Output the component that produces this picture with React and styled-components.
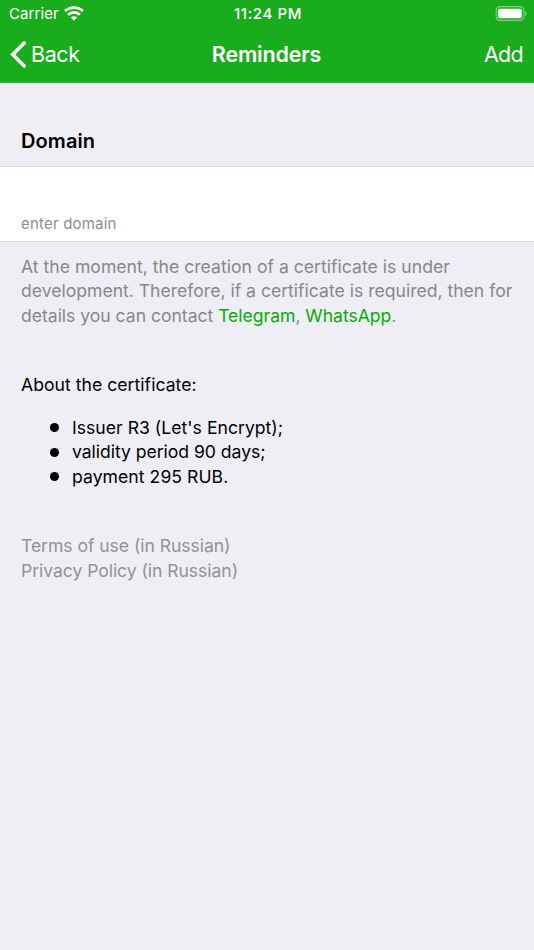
import styled, {createGlobalStyle} from 'styled-components';

const GlobalStyle = createGlobalStyle`
  * {
    box-sizing: border-box;
  }
  body {
    margin: 0;
    background: #efeef4;
    color: #000;
    font-family: Inter, 'Liberation Sans', sans-serif;
  }
`;
const Screen = styled.div`
  min-height: 950px;
  overflow: hidden;
`;
const Header = styled.header`
  height: 83px;
  background: #19ad1d;
  border-bottom: 1px solid #3fb548;
  color: white;
`;
const StatusBar = styled.div`
  display: grid;
  grid-template-columns: 1fr auto 1fr;
  align-items: center;
  height: 26px;
  padding: 1px 7px 0 9px;
`;
const Carrier = styled.div`
  display: flex;
  align-items: center;
  gap: 5px;
`;
const NavBar = styled(StatusBar).attrs({as: 'nav'})`
  height: 57px;
  padding: 0 11px 0 10px;
`;
const NavButton = styled.a`
  display: flex;
  align-items: center;
  justify-self: ${(props) => props.$end ? 'end' : 'start'};
  gap: 5px;
`;
const Battery = styled.svg`
  justify-self: end;
`;
const Label = styled.span`
  font-size: ${(props) => props.$size}px;
  font-weight: ${(props) => props.$weight || 400};
  letter-spacing: ${(props) => props.$spacing || 0}px;
  line-height: 1.2;
  white-space: nowrap;
`;
const SectionTitle = styled.h2`
  display: flex;
  align-items: flex-end;
  height: 83px;
  margin: 0;
  padding: 0 21px 13px;
`;
const Field = styled.label`
  display: flex;
  align-items: flex-end;
  height: 76px;
  padding: 0 21px 8px;
  background: white;
  border-top: 1px solid #d9d9dc;
  border-bottom: 1px solid #d9d9dc;
  color: #8e8e8e;
`;
const Content = styled.main`
  padding: 12.6px 21px 0;
  font-size: 17.6px;
  line-height: 24.5px;
`;
const Note = styled.p`
  margin: 0;
  color: #87878b;
`;
const Line = styled.span`
  display: block;
  width: max-content;
  letter-spacing: ${(props) => props.$spacing || 0}px;
`;
const Contact = styled.a`
  color: #08a80c;
`;
const About = styled.p`
  margin: 44.8px 0 18.2px;
`;
const Terms = styled.ul`
  margin: 0 0 45px;
  padding: 0 0 0 29px;
  list-style: none;
`;
const Term = styled.li`
  display: flex;
  align-items: center;
  gap: 13px;

  &::before {
    content: '';
    width: 9px;
    height: 9px;
    border-radius: 50%;
    background: black;
  }
`;
const Links = styled(Note).attrs({as: 'div'})`
  color: #929296;
`;

function WifiIcon(){
    return (<svg width="20" height="15" viewBox="0 0 20 15" fill="none" stroke="white" strokeWidth="2.7">
        <path d="M1 5.1C6 .4 14 .4 19 5.1"/>
        <path d="M4.1 8.7C7.4 5.6 12.6 5.6 15.9 8.7"/>
        <path d="M10 14.6L6.8 11.4C8.6 9.7 11.4 9.7 13.2 11.4Z" fill="white" stroke="none"/>
    </svg>);
}

function BatteryIcon(){
    return (<Battery width="32" height="15" viewBox="0 0 32 15">
        <rect x="1.2" y=".7" width="27.6" height="13.6" rx="3.7" fill="none" stroke="white" strokeOpacity=".45" strokeWidth="1.2"/>
        <rect x="3.1" y="2.7" width="23.7" height="9.6" rx="1.8" fill="white"/>
        <path d="M30.2 5.2C32 6 32 9 30.2 9.8Z" fill="white" fillOpacity=".5"/>
    </Battery>);
}

function BackIcon(){
    return (<svg width="16" height="27" viewBox="0 0 16 27" fill="none" stroke="white" strokeWidth="3.6">
        <path d="M14.2 2L2.8 13.5L14.2 25" strokeLinecap="round"/>
    </svg>);
}

function App(){
    return (<Screen>
        <GlobalStyle/>
        <Header>
            <StatusBar>
                <Carrier>
                    <Label $size={15} $spacing={0.1}>Carrier</Label>
                    <WifiIcon/>
                </Carrier>
                <Label $size={15} $weight={500} $spacing={0.6}>11:24 PM</Label>
                <BatteryIcon/>
            </StatusBar>
            <NavBar>
                <NavButton><BackIcon/><Label $size={21.5} $spacing={-0.4}>Back</Label></NavButton>
                <Label $size={21.5} $weight={600} $spacing={-0.2}>Reminders</Label>
                <NavButton $end><Label $size={21.5} $spacing={-0.7}>Add</Label></NavButton>
            </NavBar>
        </Header>
        <SectionTitle><Label $size={20} $weight={600} $spacing={0.1}>Domain</Label></SectionTitle>
        <Field><Label $size={15} $spacing={0.2}>enter domain</Label></Field>
        <Content>
            <Note>
                <Line $spacing={0.01}>At the moment, the creation of a certificate is under</Line>
                <Line $spacing={-0.01}>development. Therefore, if a certificate is required, then for</Line>
                <Line $spacing={-0.03}>details you can contact <Contact>Telegram</Contact>, <Contact>WhatsApp</Contact>.</Line>
            </Note>
            <About><Line $spacing={0.03}>About the certificate:</Line></About>
            <Terms>
                <Term><Line $spacing={0.02}>Issuer R3 (Let's Encrypt);</Line></Term>
                <Term><Line $spacing={-0.04}>validity period 90 days;</Line></Term>
                <Term><Line $spacing={0.05}>payment 295 RUB.</Line></Term>
            </Terms>
            <Links>
                <Line $spacing={-0.06}>Terms of use (in Russian)</Line>
                <Line $spacing={-0.06}>Privacy Policy (in Russian)</Line>
            </Links>
        </Content>
    </Screen>);
}
export default App;
